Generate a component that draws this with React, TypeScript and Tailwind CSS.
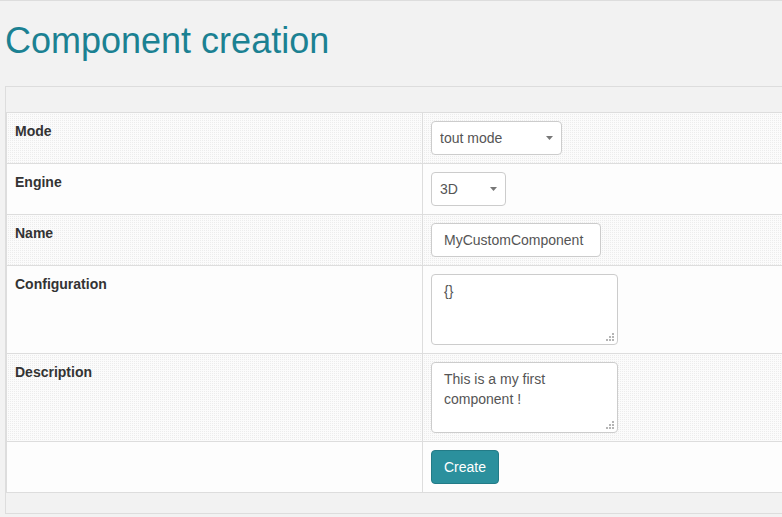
import React from "react";

function Caret() {
  return (
    <svg
      className="pointer-events-none absolute right-[9px] top-[15px]"
      width="7"
      height="4"
      viewBox="0 0 7 4"
    >
      <path d="M0 0 H7 L3.5 4 Z" fill="#777" />
    </svg>
  );
}

function Grip() {
  return (
    <svg
      className="pointer-events-none absolute right-[4px] bottom-[4px]"
      width="8"
      height="8"
      viewBox="0 0 8 8"
    >
      <rect x="6" y="0" width="2" height="2" fill="#b5b5b5" />
      <rect x="3" y="3" width="2" height="2" fill="#b5b5b5" />
      <rect x="6" y="3" width="2" height="2" fill="#b5b5b5" />
      <rect x="0" y="6" width="2" height="2" fill="#b5b5b5" />
      <rect x="3" y="6" width="2" height="2" fill="#b5b5b5" />
      <rect x="6" y="6" width="2" height="2" fill="#b5b5b5" />
    </svg>
  );
}

const pattern =
  "bg-[#fbfbfb] bg-[image:linear-gradient(90deg,#fbfbfb_50%,transparent_50%),linear-gradient(#fbfbfb_50%,#ececec_50%)] bg-size-[2px_2px]";
const plain = "bg-[#fdfdfd]";

function Row({
  label,
  striped,
  children,
}: {
  label?: string;
  striped?: boolean;
  children: React.ReactNode;
}) {
  return (
    <div className={`flex border-b border-[#dddddd] ${striped ? pattern : plain}`}>
      <div className="w-[415px] shrink-0 p-2 font-bold text-[#333]">{label}</div>
      <div className="flex-1 border-l border-[#dddddd] p-2">{children}</div>
    </div>
  );
}

export default function App() {
  return (
    <div
      className="h-[517px] w-[782px] overflow-hidden border-t border-[#dddddd] bg-[#f2f2f2] text-[14px] leading-[20px] text-[#333]"
      style={{ fontFamily: '"Liberation Sans", Arial, sans-serif' }}
    >
      <h1 className="ml-[5px] mt-[20px] text-[36px] leading-[40px] font-normal text-[#1b8192]">
        Component creation
      </h1>
      <div className="ml-[5px] mt-[25px] w-[840px] border border-[#dddddd] bg-[#f2f2f2]">
        <div className="h-[25px]" />
        <div className="ml-0 border-l border-t border-[#dddddd]">
          <Row label="Mode" striped>
            <div className="relative w-[131px]">
              <select
                defaultValue="tout"
                className="h-[34px] w-[131px] appearance-none rounded-[4px] border border-[#cccccc] bg-white pl-[8px] text-[14px] text-[#555] outline-none"
              >
                <option value="tout">tout mode</option>
              </select>
              <Caret />
            </div>
          </Row>
          <Row label="Engine">
            <div className="relative w-[75px]">
              <select
                defaultValue="3D"
                className="h-[34px] w-[75px] appearance-none rounded-[4px] border border-[#cccccc] bg-white pl-[8px] text-[14px] text-[#555] outline-none"
              >
                <option value="3D">3D</option>
              </select>
              <Caret />
            </div>
          </Row>
          <Row label="Name" striped>
            <input
              defaultValue="MyCustomComponent"
              className="block h-[34px] w-[170px] rounded-[4px] border border-[#cccccc] bg-white px-[12px] text-[14px] text-[#555] outline-none"
            />
          </Row>
          <Row label="Configuration">
            <div className="relative w-[187px]">
              <textarea
                defaultValue="{}"
                className="block h-[71px] w-[187px] resize-none rounded-[4px] border border-[#cccccc] bg-white px-[12px] py-[6px] text-[14px] leading-[20px] text-[#555] outline-none"
              />
              <Grip />
            </div>
          </Row>
          <Row label="Description" striped>
            <div className="relative w-[187px]">
              <textarea
                defaultValue="This is a my first component !"
                className="block h-[71px] w-[187px] resize-none rounded-[4px] border border-[#cccccc] bg-white px-[12px] py-[6px] text-[14px] leading-[20px] text-[#555] outline-none"
              />
              <Grip />
            </div>
          </Row>
          <Row>
            <button className="block h-[34px] rounded-[4px] border border-[#237b87] bg-[#2b909d] px-[12px] text-[14px] leading-[20px] text-white">
              Create
            </button>
          </Row>
        </div>
        <div className="h-[20px]" />
      </div>
    </div>
  );
}
